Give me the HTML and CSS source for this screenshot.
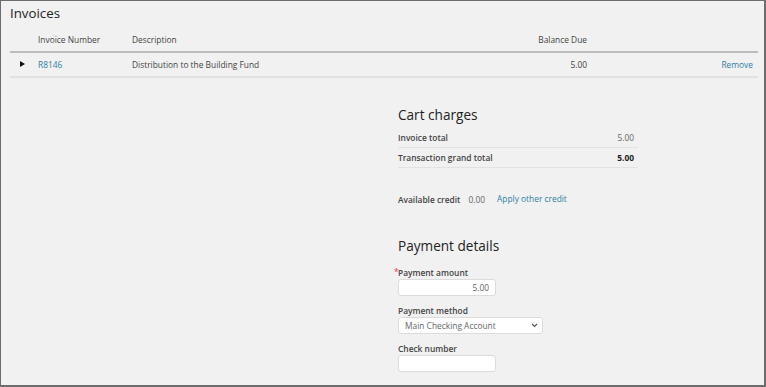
FILE: index.html
```html
<!DOCTYPE html>
<html lang="en">

<head>
    <meta charset="UTF-8">
    <meta name="viewport" content="width=device-width, initial-scale=1.0">
    <title>Invoices</title>
    <link rel="stylesheet" href="styles.css">
</head>

<body>
    <div class="marco">
        <h2 class="titulo">Invoices</h2>
        <table class="tablaFacturas">
            <tr>
                <th class="colFlecha"></th>
                <th class="colNumero">Invoice Number</th>
                <th class="colDesc">Description</th>
                <th class="colSaldo">Balance Due</th>
                <th class="colQuitar"></th>
            </tr>
            <tr>
                <td class="colFlecha"><span class="flecha"></span></td>
                <td class="colNumero"><a href="#">R8146</a></td>
                <td class="colDesc">Distribution to the Building Fund</td>
                <td class="colSaldo">5.00</td>
                <td class="colQuitar"><a href="#">Remove</a></td>
            </tr>
        </table>

        <div class="columnas">
            <div></div>
            <div class="resumen">
                <h3 class="subtitulo">Cart charges</h3>
                <div class="fila">
                    <span class="etiqueta">Invoice total</span>
                    <span class="valor">5.00</span>
                </div>
                <div class="fila">
                    <span class="etiqueta">Transaction grand total</span>
                    <span class="valor fuerte">5.00</span>
                </div>

                <div class="credito">
                    <span class="etiqueta">Available credit</span>
                    <span class="valor">0.00</span>
                    <a href="#">Apply other credit</a>
                </div>

                <h3 class="subtitulo pago">Payment details</h3>
                <label class="campo">
                    <span class="etiqueta requerido">Payment amount</span>
                    <input type="text" class="entrada numero" value="5.00">
                </label>
                <label class="campo">
                    <span class="etiqueta">Payment method</span>
                    <span class="envoltura">
                        <select class="selector">
                            <option>Main Checking Account</option>
                        </select>
                        <svg class="chevron" width="7" height="5" viewBox="0 0 7 5"><path d="M1 1 L3.5 3.5 L6 1" fill="none" stroke="#555" stroke-width="1.2"/></svg>
                    </span>
                </label>
                <label class="campo">
                    <span class="etiqueta">Check number</span>
                    <input type="text" class="entrada">
                </label>
            </div>
        </div>
    </div>
</body>

</html>
```

FILE: styles.css
```css
html {
    font-family: 'Open Sans', 'Liberation Sans', Arial, sans-serif;
    font-size: 8.4px;
    line-height: 12px;
    color: #333;
}

body {
    margin: 0;
    padding: 0;
    background-color: #f1f1f1;
}

a {
    color: #2e7fa1;
    text-decoration: none;
}

.marco {
    box-sizing: border-box;
    height: 387px;
    border-top: 1px solid #6d6d6d;
    border-left: 1px solid #6d6d6d;
    border-right: 2px solid #6d6d6d;
    border-bottom: 2px solid #6d6d6d;
    padding: 0 6px 0 9px;
    overflow: hidden;
}

.titulo {
    font-size: 13.3px;
    line-height: 18px;
    font-weight: normal;
    margin: 3px 0 0 0;
    color: #222;
}

.tablaFacturas {
    width: 100%;
    border-collapse: collapse;
    margin-top: 6px;
}

.tablaFacturas th {
    font-weight: normal;
    text-align: left;
    height: 23px;
    padding: 0;
    border-bottom: 2px solid #bdbdbd;
    color: #444;
}

.tablaFacturas td {
    height: 23px;
    padding: 0;
    border-bottom: 2px solid #e2e2e2;
    color: #444;
}

.colFlecha {
    width: 28px;
}

.colNumero {
    width: 94px;
}

.colSaldo {
    width: 80px;
    text-align: right !important;
}

.colQuitar {
    width: 166px;
    text-align: right;
    padding-right: 5px !important;
}

.flecha {
    display: inline-block;
    margin-left: 10px;
    border-left: 5px solid #111;
    border-top: 3px solid transparent;
    border-bottom: 3px solid transparent;
    vertical-align: 1px;
}

.columnas {
    display: grid;
    grid-template-columns: 1fr 1fr;
}

.resumen {
    padding-left: 14px;
    width: 240px;
}

.subtitulo {
    font-size: 13.6px;
    line-height: 20px;
    font-weight: normal;
    color: #222;
    margin: 27px 0 3px 0;
}

.fila {
    display: flex;
    justify-content: space-between;
    border-bottom: 1px solid #e2e2e2;
    padding: 4px 4px 3px 0;
}

.etiqueta {
    font-weight: 600;
    color: #444;
}

.valor {
    color: #666;
}

.fuerte {
    font-weight: bold;
    color: #222;
}

.credito {
    margin-top: 26px;
    display: flex;
    gap: 8px;
    align-items: baseline;
}

.credito a {
    margin-left: 4px;
    position: relative;
    top: -1px;
}

.pago {
    margin-top: 30px;
    margin-bottom: 11px;
}

.campo {
    display: flex;
    flex-direction: column;
    align-items: flex-start;
    gap: 0;
    margin-bottom: 9px;
}

.requerido {
    position: relative;
}

.requerido::before {
    content: "*";
    color: #e03a3a;
    position: absolute;
    left: -4px;
    top: -1px;
    font-weight: normal;
}

.entrada {
    box-sizing: border-box;
    width: 98px;
    height: 17px;
    border: 1px solid #dcdcdc;
    border-radius: 3px;
    background: white;
    font: inherit;
    color: #666;
    padding: 0 6px;
}

.numero {
    text-align: right;
}

.envoltura {
    position: relative;
    display: inline-block;
    height: 17px;
}

.selector {
    box-sizing: border-box;
    width: 145px;
    height: 17px;
    border: 1px solid #dcdcdc;
    border-radius: 3px;
    background: white;
    font: inherit;
    color: #666;
    padding: 0 6px;
    appearance: none;
    -webkit-appearance: none;
    vertical-align: top;
}

.chevron {
    position: absolute;
    right: 5px;
    top: 6px;
    pointer-events: none;
}
```
